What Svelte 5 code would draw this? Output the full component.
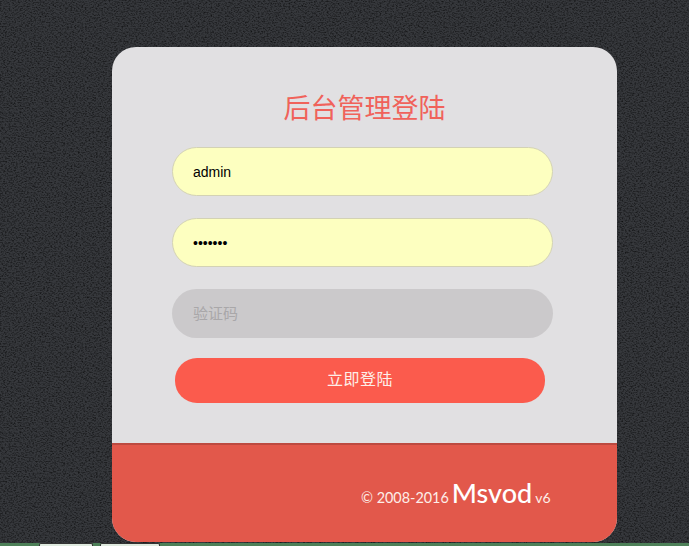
<script>
  let username = "admin";
  let password = "1234567";
  let code = "";
</script>

<div class="page">
  <svg class="texture" width="689" height="546" aria-hidden="true">
    <filter id="grain" x="0" y="0" width="100%" height="100%">
      <feTurbulence type="fractalNoise" baseFrequency="0.55 0.8" numOctaves="2" seed="7" />
      <feColorMatrix type="matrix" values="0 0 0 0 0  0 0 0 0 0  0 0 0 0 0  1.4 0 0 0 -0.58" />
    </filter>
    <rect width="689" height="546" filter="url(#grain)" />
  </svg>
  <div class="login">
    <form class="login-form" on:submit|preventDefault>
      <h1>后台管理登陆</h1>
      <input class="field" type="text" bind:value={username} />
      <input class="field" type="password" bind:value={password} />
      <input class="field code" type="text" placeholder="验证码" bind:value={code} />
      <button type="submit"><span>立即登陆</span></button>
    </form>
    <div class="login-footer">
      <span class="copy">© 2008-2016</span>
      <span class="brand">Msvod</span>
      <span class="ver">v6</span>
    </div>
  </div>
  <div class="taskbar">
    <span class="tab first"></span>
    <span class="tab second"></span>
  </div>
</div>

<style>
  :global(body) {
    margin: 0;
    overflow: hidden;
    background: #36383c;
  }

  .page {
    position: relative;
    display: flex;
    flex-direction: column;
    width: 689px;
    height: 546px;
    box-sizing: border-box;
    padding: 47px 0 0 112px;
    background-color: #36383c;
  }

  .texture {
    position: absolute;
    left: 0;
    top: 0;
  }

  .login {
    position: relative;
    width: 505px;
    height: 495px;
    display: flex;
    flex-direction: column;
    border-radius: 24px;
    overflow: hidden;
    background: #e1e0e2;
  }

  .login-form {
    flex: 1;
    display: flex;
    flex-direction: column;
    align-items: flex-start;
    padding: 0 0 0 60px;
  }

  h1 {
    margin: 43px 0 0;
    height: 57px;
    width: 385px;
    text-align: center;
    font-family: "Noto Sans CJK SC", sans-serif;
    font-size: 27px;
    font-weight: 400;
    line-height: 34px;
    color: #f0625a;
  }

  .field {
    box-sizing: border-box;
    width: 381px;
    height: 49px;
    margin: 0 0 22px;
    padding: 0 20px;
    border: 1px solid #d3d2b4;
    border-radius: 25px;
    outline: none;
    background: #fdffc0;
    font-family: "Liberation Sans", Arial, sans-serif;
    font-size: 14px;
    color: #000;
  }

  .code {
    border: none;
    margin-bottom: 20px;
    padding: 0 21px 2px;
    background: #cbc9cb;
    font-family: "Noto Sans CJK SC", sans-serif;
    font-size: 15px;
  }

  .code::placeholder {
    color: #a9a7a9;
    opacity: 1;
    font-weight: 400;
  }

  button {
    width: 370px;
    height: 45px;
    margin-left: 3px;
    padding: 0 0 6px;
    border: none;
    border-radius: 22px;
    background: #fb5b4d;
    color: #fdeee8;
    font-family: "Noto Sans CJK SC", sans-serif;
    font-size: 16px;
    font-weight: 400;
    letter-spacing: 0.5px;
  }

  .login-footer {
    box-sizing: border-box;
    height: 99px;
    display: flex;
    align-items: baseline;
    gap: 3px;
    padding: 31px 0 0 249px;
    border-top: 2px solid #bd4a40;
    background: #e2584b;
    color: #fdeee8;
    font-family: Lato, sans-serif;
  }

  .copy {
    font-size: 14.4px;
  }

  .brand {
    font-size: 27px;
    font-weight: 500;
    color: #fff;
  }

  .ver {
    font-size: 14px;
  }

  .taskbar {
    position: absolute;
    left: 0;
    right: 0;
    bottom: 0;
    height: 3px;
    background: #4d8058;
  }

  .tab {
    position: absolute;
    top: 0;
    height: 3px;
    background: #dfeadf;
    border: 1px solid #333;
    border-bottom: none;
    box-sizing: border-box;
    border-radius: 2px 2px 0 0;
  }

  .first {
    left: 39px;
    width: 54px;
  }

  .second {
    left: 100px;
    width: 60px;
  }
</style>
